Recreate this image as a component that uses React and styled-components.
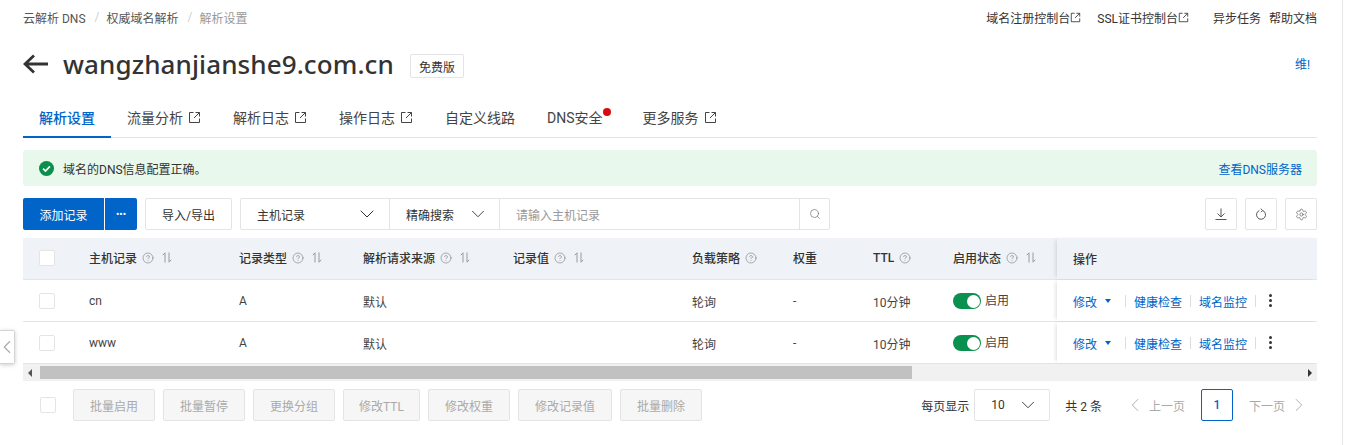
import React from "react";
import styled, { createGlobalStyle } from "styled-components";
import { ChevronDown, ChevronLeft, ChevronRight, CircleHelp, Search, Settings } from "lucide-react";

const Global = createGlobalStyle`
  html, body { margin: 0; padding: 0; background: #fff; overflow: hidden; }
  body { font-family: Roboto, "Noto Sans CJK SC", sans-serif; font-size: 12px; color: #333; }
  * { box-sizing: border-box; }
`;
const BLUE = "#0064c8";

const Page = styled.div`
  width: 1343px; height: 445px; padding: 0 25px 0 23px;
  border-right: 1px solid #e6e7e9; position: relative;
`;
const TopBar = styled.div`height: 34px; display: flex; align-items: center; justify-content: space-between;`;
const Crumbs = styled.div`display: flex; align-items: center; color: #555;`;
const Sep = styled.span`color: #d0d0d0; margin: 0 7px 0 9px;`;
const CrumbNow = styled.span`color: #999;`;
const TopLinks = styled.div`display: flex; align-items: center; color: #333;`;
const TopLink = styled.span`display: flex; align-items: center; margin-left: ${p => p.$ml || 0}px;`;

const TitleRow = styled.div`
  height: 66px; display: flex; align-items: center; padding: 0 7px 6px 0; justify-content: flex-start;
`;
const Domain = styled.h1`
  margin: 0 16px 0 15px; font: 500 26px/36px "Noto Sans", "Open Sans", sans-serif; color: #333; letter-spacing: .1px;
`;
const Tag = styled.span`
  height: 24px; width: 54px; border: 1px solid #e3e4e6; border-radius: 2px; display: flex; align-items: center;
  justify-content: center; color: #333; margin-top: 4px;
`;
const Notice = styled.span`margin-left: auto; color: ${BLUE}; margin-top: -2px;`;

const Tabs = styled.div`height: 38px; display: flex; border-bottom: 1px solid #e3e4e6;`;
const Tab = styled.div`
  height: 38px; padding: 0 ${p => p.$pr || 16}px 2px 16px; display: flex; align-items: center; font-size: 14px; position: relative;
  color: ${p => p.$active ? BLUE : "#444"}; font-weight: ${p => p.$active ? 500 : 400};
  border-bottom: 2px solid ${p => p.$active ? BLUE : "transparent"};
  & > svg { margin-left: 5px; }
`;
const Dot = styled.i`
  position: absolute; width: 8px; height: 8px; border-radius: 50%; background: #d80a12; right: 16px; top: 8px;
`;

const Alert = styled.div`
  margin-top: 12px; height: 36px; background: #e8f8ec; border-radius: 3px; display: flex; align-items: center;
  justify-content: space-between; padding: 0 15px 0 16px; color: #333;
`;
const AlertMsg = styled.div`display: flex; align-items: center; gap: 9px;`;
const LinkText = styled.span`color: ${BLUE};`;

const Toolbar = styled.div`margin-top: 12px; height: 32px; display: flex;`;
const Primary = styled.div`
  height: 32px; background: #0064c8; color: #fff; display: flex; align-items: center; justify-content: center;
  width: ${p => p.$w}px; border-radius: ${p => p.$r}; font-size: ${p => p.$fs || 12}px;
  margin-left: ${p => p.$ml || 0}px;
`;
const Btn = styled.div`
  height: 32px; border: 1px solid #e3e4e6; border-radius: 2px; background: #fff; display: flex; align-items: center;
  justify-content: center; width: ${p => p.$w}px; margin-left: ${p => p.$ml || 0}px; color: #333;
`;
const SearchGroup = styled.div`
  margin-left: 8px; display: flex; height: 32px; border: 1px solid #e3e4e6; border-radius: 2px;
`;
const SelectCell = styled.div`
  width: ${p => p.$w}px; border-right: 1px solid #e3e4e6; display: flex; align-items: center; justify-content: space-between;
  padding: 0 ${p => p.$pr}px 0 16px;
`;
const Placeholder = styled.div`width: 300px; padding-left: 16px; color: #999; display: flex; align-items: center; border-right: 1px solid #e3e4e6;`;
const SearchIcon = styled.div`width: 29px; display: flex; align-items: center; justify-content: center; color: #666;`;
const Spacer = styled.div`flex: 1;`;
const IconBtn = styled(Btn)`width: 32px; color: #555; margin-left: 8px;`;

const COLS = "50px 150px 124px 150px 179px 101px 80px 80px 120px 260px";
const HeadRow = styled.div`
  margin-top: 8px; height: 42px; display: grid; grid-template-columns: ${COLS}; background: #eff3f8; border-bottom: 1px solid #e3e4e6;
`;
const Row = styled.div`
  height: 42px; display: grid; grid-template-columns: ${COLS}; border-bottom: 1px solid #e3e4e6; background: #fff;
`;
const Cell = styled.div`
  display: flex; align-items: center; padding: ${p => p.$head ? "0 0 2px 16px" : "1px 0 0 16px"}; color: ${p => p.$head ? "#333" : "#444"}; white-space: nowrap;
  font-weight: ${p => p.$head ? 500 : 400};
`;
const OpCell = styled(Cell)`
  box-shadow: -3px 0 4px -2px rgba(0,0,0,.14); position: relative; padding-bottom: 0;
`;
const Check = styled.span`
  width: 16px; height: 16px; border: 1px solid #e3e4e6; border-radius: 2px; background: #fff; display: block;
`;
const HelpWrap = styled.span`display: inline-flex; margin-left: 5px; color: #777;`;
const SortWrap = styled.span`display: inline-flex; margin-left: 8px; color: #999;`;
const Switch = styled.span`
  width: 28px; height: 16px; border-radius: 8px; background: #0a9150; position: relative; margin-right: 4px; display: block;
  &::after { content: ""; position: absolute; width: 13px; height: 13px; right: 1.5px; top: 1.5px; background: #fff; border-radius: 50%; }
`;
const SwitchLabel = styled.span`margin-bottom: 3px;`;
const OpLink = styled.span`color: ${BLUE};`;
const Caret = styled.i`
  width: 0; height: 0; border: 3.5px solid transparent; border-top: 4px solid ${BLUE}; border-bottom: 0; margin: 0 14px 0 8px; display: block;
`;
const Divider = styled.i`width: 1px; height: 12px; background: #dcdde0; margin: 0 8px 0 ${p => p.$flush ? 0 : 8}px; display: block;`;
const Kebab = styled.span`
  display: flex; flex-direction: column; gap: 2px; margin-left: 5px; margin-top: -2px;
  & > i { display: block; width: 3px; height: 3px; border-radius: 50%; background: #333; }
`;

const Scrollbar = styled.div`
  height: 17px; background: #f1f1f1; position: relative; display: flex; align-items: center; justify-content: space-between; padding: 0 5px;
`;
const Thumb = styled.div`
  position: absolute; left: 17px; top: 2px; width: 872px; height: 13px; background: #c1c1c1;
`;
const ArrowL = styled.i`width: 0; height: 0; border: 4px solid transparent; border-right: 4px solid #555; border-left: 0; display: block;`;
const ArrowR = styled.i`width: 0; height: 0; border: 4px solid transparent; border-left: 4px solid #333; border-right: 0; display: block;`;

const Footer = styled.div`margin-top: 8px; height: 32px; display: flex; align-items: center; padding-left: 17px;`;
const BatchBtn = styled.div`
  height: 32px; width: ${p => p.$w}px; background: #f6f6f6; border: 1px solid #e3e4e6; border-radius: 2px; color: #aaa; display: flex;
  align-items: center; justify-content: center; margin-left: ${p => p.$first ? 17 : 8}px;
`;
const Pager = styled.div`margin-left: auto; display: flex; align-items: center; padding-right: 7px;`;
const PageSelect = styled.div`
  width: 76px; height: 32px; border: 1px solid #e3e4e6; border-radius: 2px; display: flex; align-items: center; justify-content: space-between;
  padding: 0 10px 0 16px; margin: 0 15px 0 5px;
`;
const PageNav = styled.span`color: #aaa; display: flex; align-items: center; gap: 3px; margin-left: ${p => p.$ml}px;`;
const PageNum = styled.div`
  width: 32px; height: 32px; border: 1px solid ${BLUE}; border-radius: 2px; color: ${BLUE}; font-weight: 500; display: flex; align-items: center; justify-content: center; margin-left: 16px;
`;
const Handle = styled.div`
  position: absolute; left: 0; top: 330px; width: 15px; height: 34px; background: #fff; border: 1px solid #d4d4d4; border-left: 0;
  border-radius: 0 2px 2px 0; box-shadow: 0 1px 4px rgba(0,0,0,.2); display: flex; align-items: center; justify-content: center; color: #aaa;
  & > svg { flex-shrink: 0; }
`;

const BackArrow = () => (
  <svg width="25" height="20" viewBox="0 0 25 20" fill="none" stroke="#333" strokeWidth="2.8">
    <path d="M25 10H2M11 1.5L2 10l9 8.5" />
  </svg>
);
const External = ({ size = 13, c = "currentColor" }) => (
  <svg width={size} height={size} viewBox="0 0 13 13" fill="none" stroke={c} strokeWidth="1">
    <path d="M5.5 1.5H1.5v10h10V7.5" />
    <path d="M7.5 1.5h4v4M11.5 1.5L6 7" />
  </svg>
);
const Sort = () => (
  <svg width="10" height="11" viewBox="0 0 10 11" fill="none" stroke="currentColor" strokeWidth="1">
    <path d="M3 10.5V.8L.8 3.2M7 .5v9.7l2.2-2.4" />
  </svg>
);
const DownloadIcon = () => (
  <svg width="12" height="13" viewBox="0 0 12 13" fill="none" stroke="currentColor" strokeWidth="1">
    <path d="M6 .5v8M2.5 5.5L6 9l3.5-3.5M.5 11.5h11" />
  </svg>
);
const RefreshIcon = () => (
  <svg width="12" height="13" viewBox="0 0 12 13" fill="none" stroke="currentColor" strokeWidth="1">
    <path d="M7.5 2.5a4.5 4.5 0 1 1-3.2.1" />
    <path d="M5.8 .7L7.6 2.5 6 4.2" />
  </svg>
);
const Help = () => <HelpWrap><CircleHelp size={12} strokeWidth={1.2} /></HelpWrap>;
const SortI = () => <SortWrap><Sort /></SortWrap>;
const Ok = () => (
  <svg width="15" height="15" viewBox="0 0 14 14">
    <circle cx="7" cy="7" r="7" fill="#0a8f4d" />
    <path d="M3.8 7.2l2.2 2.2 4.2-4.4" fill="none" stroke="#fff" strokeWidth="1.6" />
  </svg>
);

const head = [
  ["主机记录", 1, 1], ["记录类型", 1, 1], ["解析请求来源", 1, 1], ["记录值", 1, 1], ["负载策略", 1, 0], ["权重", 0, 0], ["TTL", 1, 0], ["启用状态", 1, 1],
];
const rows = ["cn", "www"];
const batch = [["批量启用", 82], ["批量暂停", 82], ["更换分组", 82], ["修改TTL", 77], ["修改权重", 82], ["修改记录值", 94], ["批量删除", 82]];

export default function App() {
  return (
    <Page>
      <Global />
      <TopBar>
        <Crumbs>云解析 DNS<Sep>/</Sep>权威域名解析<Sep>/</Sep><CrumbNow>解析设置</CrumbNow></Crumbs>
        <TopLinks>
          <TopLink>域名注册控制台<External size={11} /></TopLink>
          <TopLink $ml={16}>SSL证书控制台<External size={11} /></TopLink>
          <TopLink $ml={24}>异步任务</TopLink>
          <TopLink $ml={8}>帮助文档</TopLink>
        </TopLinks>
      </TopBar>
      <TitleRow>
        <BackArrow />
        <Domain>wangzhanjianshe9.com.cn</Domain>
        <Tag>免费版</Tag>
        <Notice>维!</Notice>
      </TitleRow>
      <Tabs>
        <Tab $active>解析设置</Tab>
        <Tab>流量分析<External /></Tab>
        <Tab>解析日志<External /></Tab>
        <Tab>操作日志<External /></Tab>
        <Tab>自定义线路</Tab>
        <Tab $pr={24}>DNS安全<Dot /></Tab>
        <Tab>更多服务<External /></Tab>
      </Tabs>
      <Alert>
        <AlertMsg><Ok />域名的DNS信息配置正确。</AlertMsg>
        <LinkText>查看DNS服务器</LinkText>
      </Alert>
      <Toolbar>
        <Primary $w={81} $r="2px 0 0 2px">添加记录</Primary>
        <Primary $w={32} $ml={1} $fs={10} $r="0 2px 2px 0">•••</Primary>
        <Btn $w={87} $ml={8}>导入/导出</Btn>
        <SearchGroup>
          <SelectCell $w={149} $pr={10}>主机记录<ChevronDown size={24} strokeWidth={1} /></SelectCell>
          <SelectCell $w={110} $pr={10}>精确搜索<ChevronDown size={22} strokeWidth={1} /></SelectCell>
          <Placeholder>请输入主机记录</Placeholder>
          <SearchIcon><Search size={12} strokeWidth={1.3} /></SearchIcon>
        </SearchGroup>
        <Spacer />
        <IconBtn><DownloadIcon /></IconBtn>
        <IconBtn><RefreshIcon /></IconBtn>
        <IconBtn><Settings size={13} strokeWidth={1.2} /></IconBtn>
      </Toolbar>
      <HeadRow>
        <Cell $head><Check /></Cell>
        {head.map(([t, h, s]) => (
          <Cell $head key={t}>{t}{h ? <Help /> : null}{s ? <SortI /> : null}</Cell>
        ))}
        <OpCell $head>操作</OpCell>
      </HeadRow>
      {rows.map(r => (
        <Row key={r}>
          <Cell><Check /></Cell>
          <Cell>{r}</Cell>
          <Cell>A</Cell>
          <Cell>默认</Cell>
          <Cell />
          <Cell>轮询</Cell>
          <Cell>-</Cell>
          <Cell>10分钟</Cell>
          <Cell><Switch /><SwitchLabel>启用</SwitchLabel></Cell>
          <OpCell>
            <OpLink>修改</OpLink><Caret />
            <Divider $flush />
            <OpLink>健康检查</OpLink><Divider />
            <OpLink>域名监控</OpLink><Divider />
            <Kebab><i /><i /><i /></Kebab>
          </OpCell>
        </Row>
      ))}
      <Scrollbar><Thumb /><ArrowL /><ArrowR /></Scrollbar>
      <Footer>
        <Check />
        {batch.map(([b, w], i) => <BatchBtn key={b} $w={w} $first={i === 0}>{b}</BatchBtn>)}
        <Pager>
          每页显示
          <PageSelect>10<ChevronDown size={22} strokeWidth={1} /></PageSelect>
          共 2 条
          <PageNav $ml={22}><ChevronLeft size={22} strokeWidth={1} />上一页</PageNav>
          <PageNum>1</PageNum>
          <PageNav $ml={16}>下一页<ChevronRight size={22} strokeWidth={1} /></PageNav>
        </Pager>
      </Footer>
      <Handle><ChevronLeft size={22} strokeWidth={1.2} /></Handle>
    </Page>
  );
}
